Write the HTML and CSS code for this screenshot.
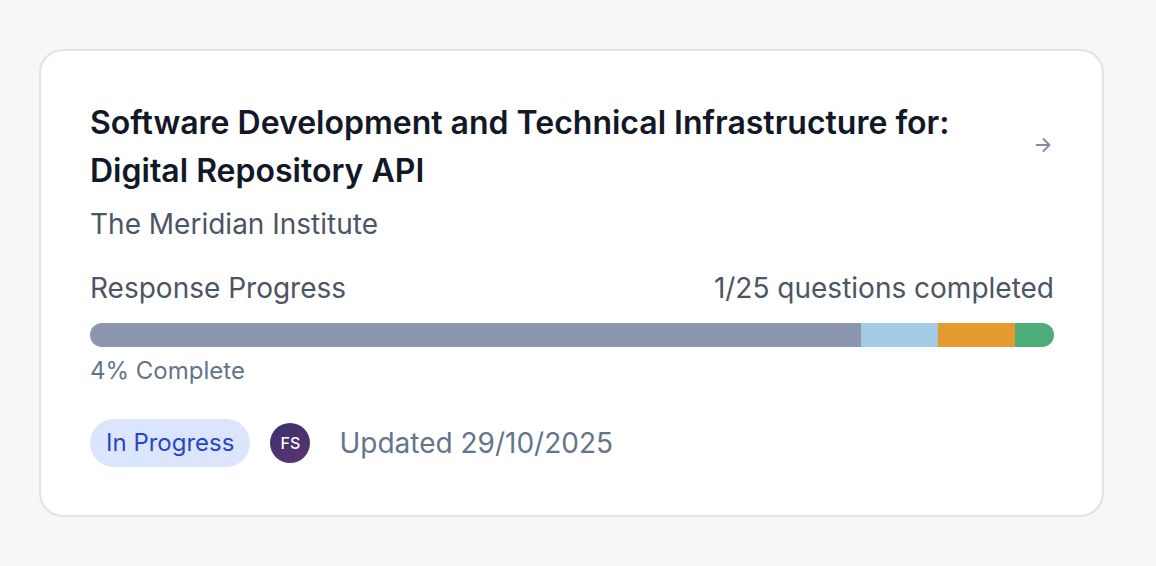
FILE: index.html
```html
<!DOCTYPE html>
<html lang="en">
<head>
<meta charset="utf-8">
<link rel="stylesheet" href="styles.css">
</head>
<body>
<main class="page">
  <article class="card">
    <div class="head">
      <div class="head-text">
        <h2 class="title">Software Development and Technical Infrastructure for: Digital Repository API</h2>
        <p class="org">The Meridian Institute</p>
      </div>
      <svg class="arrow" width="16" height="16" viewBox="0 0 16 16" fill="none" stroke="currentColor" stroke-width="1.8" stroke-linecap="round" stroke-linejoin="round"><path d="M1.5 8h13M8.5 2 14.5 8 8.5 14"/></svg>
    </div>
    <div class="progress">
      <div class="progress-row">
        <span>Response Progress</span>
        <span>1/25 questions completed</span>
      </div>
      <div class="bar">
        <div class="seg seg-gray" style="width:80%"></div>
        <div class="seg seg-blue" style="width:8%"></div>
        <div class="seg seg-orange" style="width:8%"></div>
        <div class="seg seg-green" style="width:4%"></div>
      </div>
      <div class="pct">4% Complete</div>
    </div>
    <div class="foot">
      <span class="badge">In Progress</span>
      <span class="avatar">FS</span>
      <span class="updated">Updated 29/10/2025</span>
    </div>
  </article>
</main>
</body>
</html>
```
FILE: styles.css
```css
* { box-sizing: border-box; }
html, body { margin: 0; padding: 0; }
body {
  background: #f7f7f7;
  font-family: Inter, "Noto Sans", sans-serif;
  width: 1156px;
  height: 566px;
  overflow: hidden;
}
.page { padding: 49px 52px 0 39px; }
.card {
  background: #fff;
  border: 2px solid #e2e2e2;
  border-radius: 24px;
  padding: 48px 48px 48px 49px;
  width: 1065px;
}
.head { display: flex; align-items: flex-start; justify-content: space-between; }
.title {
  margin: 0;
  font-size: 32px;
  line-height: 48px;
  font-weight: 600;
  color: #111827;
  max-width: 900px;
}
.org {
  margin: 11px 0 0;
  font-size: 28px;
  line-height: 36px;
  color: #4b5563;
}
.arrow { color: #7f8aa3; margin-top: 38px; margin-right: 3px; flex: none; }
.progress { margin-top: 28px; }
.progress-row {
  display: flex; justify-content: space-between;
  font-size: 28px; line-height: 36px; color: #4b5563;
}
.bar {
  margin-top: 17px;
  height: 24px;
  border-radius: 12px;
  overflow: hidden;
  display: flex;
}
.seg { height: 100%; }
.seg-gray { background: #8a97ae; }
.seg-blue { background: #a3cbe5; }
.seg-orange { background: #e59a30; }
.seg-green { background: #4cad79; }
.pct {
  margin-top: 8px;
  font-size: 24px; line-height: 32px; color: #64748b;
}
.foot { margin-top: 32px; display: flex; align-items: center; }
.badge {
  background: #dbe6fc;
  color: #2b44c6;
  font-size: 24px;
  line-height: 48px;
  padding: 0 16px;
  border-radius: 24px;
}
.avatar {
  margin-left: 20px;
  width: 40px; height: 40px; border-radius: 50%;
  background: linear-gradient(160deg, #39326e, #5c3470);
  color: #fff;
  font-size: 16px;
  font-weight: 500;
  display: flex; align-items: center; justify-content: center;
}
.updated { margin-left: 29px; font-size: 28px; color: #64748b; }
```
